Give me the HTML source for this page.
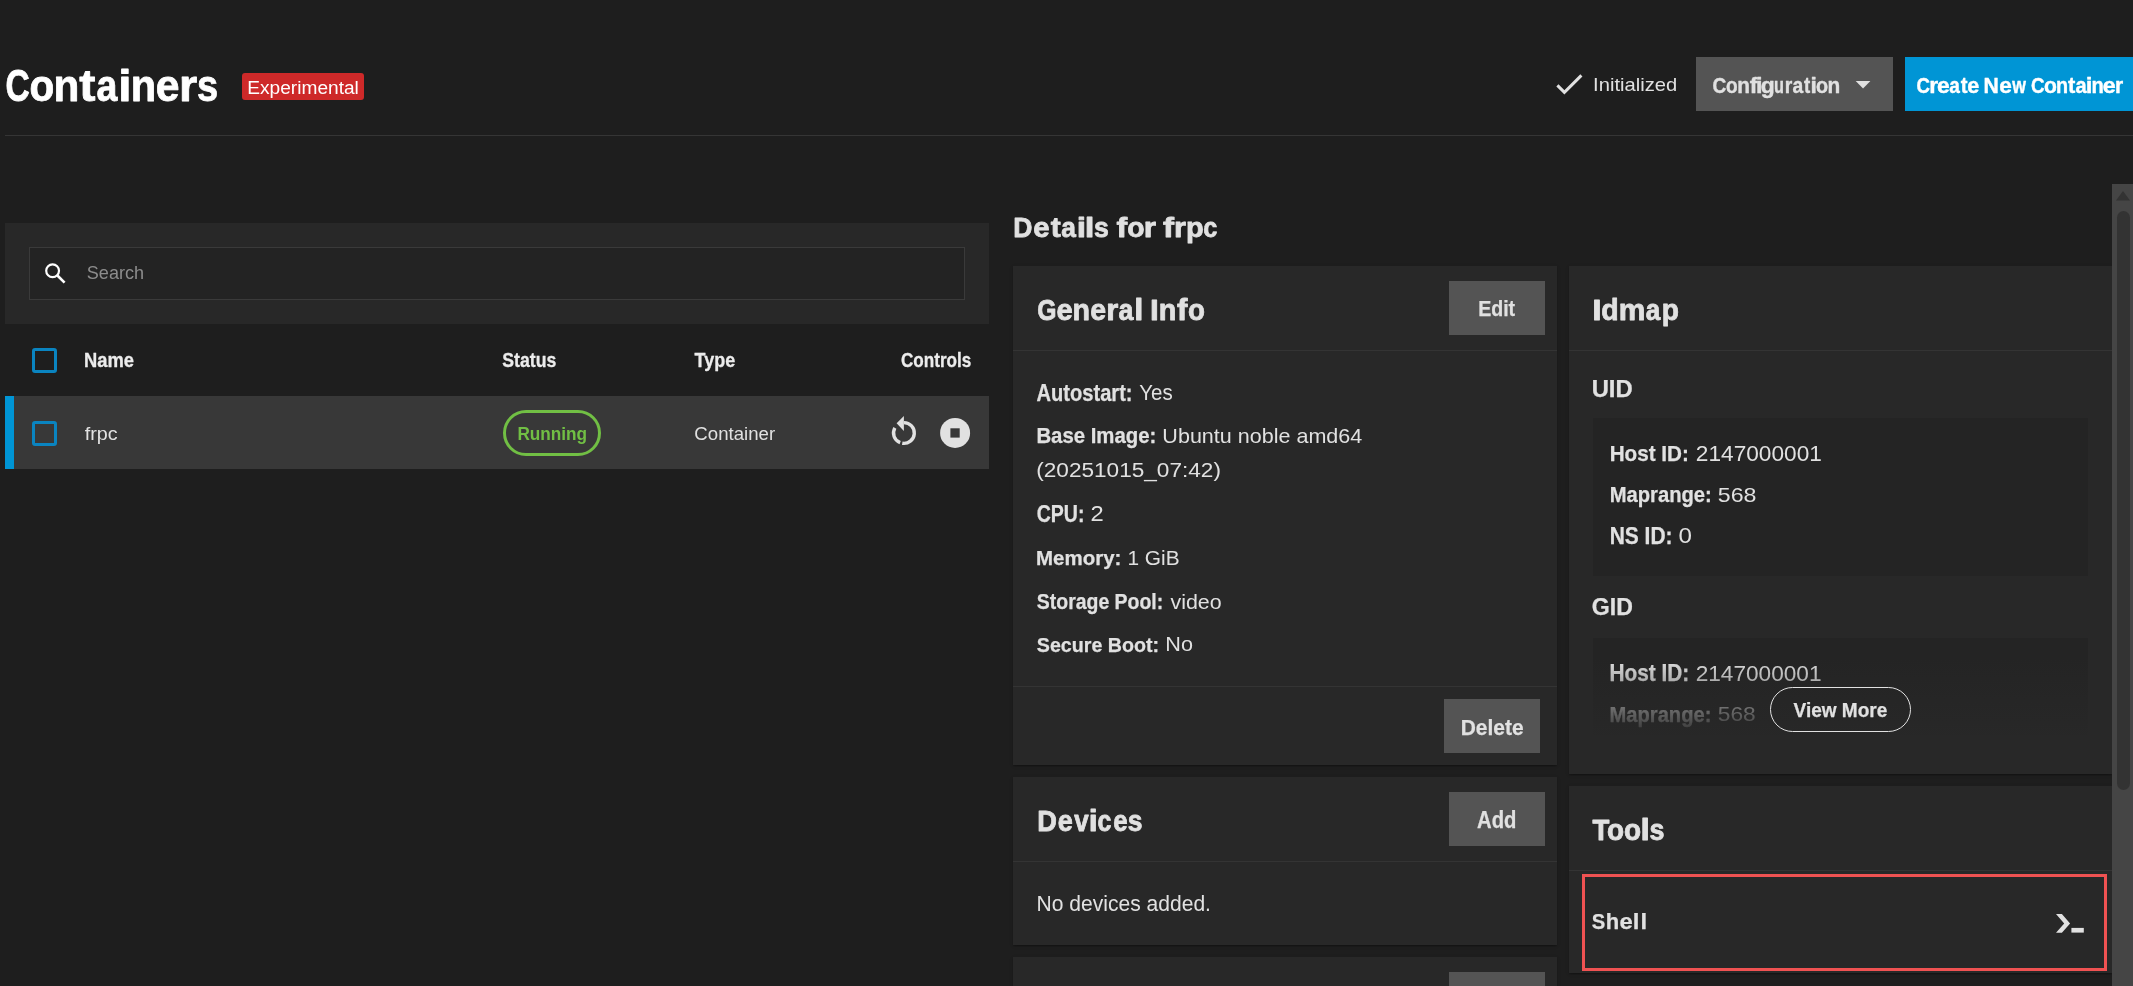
<!DOCTYPE html>
<html><head><meta charset="utf-8"><title>Containers</title>
<style>
html,body{margin:0;padding:0;}
body{width:2133px;height:986px;overflow:hidden;background:#1e1e1e;position:relative;font-family:"Liberation Sans",sans-serif;}
svg text{font-family:"Liberation Sans",sans-serif;}
</style></head><body>
<div style="position:absolute;left:5px;top:135px;width:2128px;height:1px;background:#353535;"></div>
<div style="position:absolute;left:242px;top:73px;width:122px;height:27px;background:#ce2929;border-radius:3px"></div>
<div style="position:absolute;left:1696px;top:57px;width:197px;height:54px;background:#545454;"></div>
<div style="position:absolute;left:1905px;top:57px;width:228px;height:54px;background:#0095d5;"></div>
<div style="position:absolute;left:5px;top:223px;width:984px;height:101px;background:#282828;"></div>
<div style="position:absolute;left:29px;top:247px;width:936px;height:53px;background:#232323;box-sizing:border-box;border:1px solid #3a3a3a"></div>
<div style="position:absolute;left:32px;top:348px;width:25px;height:25px;background:transparent;box-sizing:border-box;border:3px solid #0a84c0;border-radius:3px"></div>
<div style="position:absolute;left:5px;top:396px;width:984px;height:73px;background:#383838;"></div>
<div style="position:absolute;left:5px;top:396px;width:9px;height:73px;background:#0095d5;"></div>
<div style="position:absolute;left:32px;top:421px;width:25px;height:25px;background:transparent;box-sizing:border-box;border:3px solid #0a84c0;border-radius:3px"></div>
<div style="position:absolute;left:503px;top:410px;width:98px;height:46px;background:transparent;box-sizing:border-box;border:3.1px solid #71bf44;border-radius:23px"></div>
<div style="position:absolute;left:1013px;top:266px;width:544px;height:499px;background:#282828;box-shadow:0 2.7px 1.3px -1.3px rgba(0,0,0,.2),0 1.3px 1.3px 0 rgba(0,0,0,.14),0 1.3px 4px 0 rgba(0,0,0,.12)"></div>
<div style="position:absolute;left:1013px;top:350px;width:544px;height:1px;background:#343434;"></div>
<div style="position:absolute;left:1013px;top:686px;width:544px;height:1px;background:#343434;"></div>
<div style="position:absolute;left:1449px;top:281px;width:96px;height:54px;background:#545454;"></div>
<div style="position:absolute;left:1444px;top:699px;width:96px;height:54px;background:#545454;"></div>
<div style="position:absolute;left:1013px;top:777px;width:544px;height:168px;background:#282828;box-shadow:0 2.7px 1.3px -1.3px rgba(0,0,0,.2),0 1.3px 1.3px 0 rgba(0,0,0,.14),0 1.3px 4px 0 rgba(0,0,0,.12)"></div>
<div style="position:absolute;left:1013px;top:861px;width:544px;height:1px;background:#343434;"></div>
<div style="position:absolute;left:1449px;top:792px;width:96px;height:54px;background:#545454;"></div>
<div style="position:absolute;left:1013px;top:957px;width:544px;height:29px;background:#282828;box-shadow:0 2.7px 1.3px -1.3px rgba(0,0,0,.2),0 1.3px 1.3px 0 rgba(0,0,0,.14),0 1.3px 4px 0 rgba(0,0,0,.12)"></div>
<div style="position:absolute;left:1449px;top:972px;width:96px;height:14px;background:#545454;"></div>
<div style="position:absolute;left:1569px;top:266px;width:543px;height:508px;background:#282828;box-shadow:0 2.7px 1.3px -1.3px rgba(0,0,0,.2),0 1.3px 1.3px 0 rgba(0,0,0,.14),0 1.3px 4px 0 rgba(0,0,0,.12)"></div>
<div style="position:absolute;left:1569px;top:350px;width:543px;height:1px;background:#343434;"></div>
<div style="position:absolute;left:1593px;top:418px;width:495px;height:158px;background:#242424;"></div>
<div style="position:absolute;left:1593px;top:638px;width:495px;height:97px;background:linear-gradient(to bottom,#242424 0px,#242424 19px,#282828 106px);"></div>
<div style="position:absolute;left:1770px;top:687px;width:141px;height:45px;background:transparent;box-sizing:border-box;border:1.4px solid #e1e1e1;border-radius:23px"></div>
<div style="position:absolute;left:1569px;top:786px;width:543px;height:187px;background:#282828;box-shadow:0 2.7px 1.3px -1.3px rgba(0,0,0,.2),0 1.3px 1.3px 0 rgba(0,0,0,.14),0 1.3px 4px 0 rgba(0,0,0,.12)"></div>
<div style="position:absolute;left:1569px;top:870px;width:543px;height:1px;background:#343434;"></div>
<div style="position:absolute;left:1582px;top:874px;width:525px;height:97px;background:transparent;box-sizing:border-box;border:3px solid #f05252"></div>
<div style="position:absolute;left:2112px;top:184px;width:21px;height:802px;background:#454545;"></div>
<div style="position:absolute;left:2117px;top:211px;width:13px;height:579px;background:#333333;border-radius:7px"></div>
<svg width="2133" height="986" viewBox="0 0 2133 986" style="position:absolute;left:0;top:0;opacity:0.999">
<text x="5.46" y="100.70" font-size="44.07" font-weight="700" fill="#ffffff" stroke="#ffffff" stroke-width="0.80" stroke-linejoin="round" textLength="24.26" lengthAdjust="spacingAndGlyphs">C</text>
<text x="29.38" y="100.70" font-size="44.07" font-weight="700" fill="#ffffff" stroke="#ffffff" stroke-width="0.80" stroke-linejoin="round" textLength="24.78" lengthAdjust="spacingAndGlyphs">o</text>
<text x="53.45" y="100.70" font-size="44.07" font-weight="700" fill="#ffffff" stroke="#ffffff" stroke-width="0.80" stroke-linejoin="round" textLength="25.82" lengthAdjust="spacingAndGlyphs">n</text>
<text x="79.31" y="100.70" font-size="44.07" font-weight="700" fill="#ffffff" stroke="#ffffff" stroke-width="0.80" stroke-linejoin="round" textLength="16.22" lengthAdjust="spacingAndGlyphs">t</text>
<text x="96.47" y="100.70" font-size="44.07" font-weight="700" fill="#ffffff" stroke="#ffffff" stroke-width="0.80" stroke-linejoin="round" textLength="20.90" lengthAdjust="spacingAndGlyphs">a</text>
<text x="118.35" y="100.70" font-size="44.07" font-weight="700" fill="#ffffff" stroke="#ffffff" stroke-width="0.80" stroke-linejoin="round" textLength="13.30" lengthAdjust="spacingAndGlyphs">i</text>
<text x="130.69" y="100.70" font-size="44.07" font-weight="700" fill="#ffffff" stroke="#ffffff" stroke-width="0.80" stroke-linejoin="round" textLength="25.44" lengthAdjust="spacingAndGlyphs">n</text>
<text x="155.79" y="100.70" font-size="44.07" font-weight="700" fill="#ffffff" stroke="#ffffff" stroke-width="0.80" stroke-linejoin="round" textLength="23.75" lengthAdjust="spacingAndGlyphs">e</text>
<text x="178.96" y="100.70" font-size="44.07" font-weight="700" fill="#ffffff" stroke="#ffffff" stroke-width="0.80" stroke-linejoin="round" textLength="18.20" lengthAdjust="spacingAndGlyphs">r</text>
<text x="197.07" y="100.70" font-size="44.07" font-weight="700" fill="#ffffff" stroke="#ffffff" stroke-width="0.80" stroke-linejoin="round" textLength="21.20" lengthAdjust="spacingAndGlyphs">s</text>
<text x="247.27" y="94.20" font-size="17.89" font-weight="400" fill="#ffffff" textLength="111.59" lengthAdjust="spacingAndGlyphs">Experimental</text>
<polyline points="1557.4,85.4 1564.4,92.4 1581.4,75.4" fill="none" stroke="#e1e1e1" stroke-width="3"/>
<text x="1593.08" y="91.30" font-size="18.33" font-weight="400" fill="#e1e1e1" textLength="84.11" lengthAdjust="spacingAndGlyphs">Initialized</text>
<text x="1712.54" y="92.60" font-size="21.24" font-weight="700" fill="#e1e1e1" stroke="#e1e1e1" stroke-width="0.40" stroke-linejoin="round" textLength="13.78" lengthAdjust="spacingAndGlyphs">C</text>
<text x="1726.04" y="92.60" font-size="21.24" font-weight="700" fill="#e1e1e1" stroke="#e1e1e1" stroke-width="0.40" stroke-linejoin="round" textLength="11.64" lengthAdjust="spacingAndGlyphs">o</text>
<text x="1737.25" y="92.60" font-size="21.24" font-weight="700" fill="#e1e1e1" stroke="#e1e1e1" stroke-width="0.40" stroke-linejoin="round" textLength="12.72" lengthAdjust="spacingAndGlyphs">n</text>
<text x="1749.65" y="92.60" font-size="21.24" font-weight="700" fill="#e1e1e1" stroke="#e1e1e1" stroke-width="0.40" stroke-linejoin="round" textLength="7.70" lengthAdjust="spacingAndGlyphs">f</text>
<text x="1755.95" y="92.60" font-size="21.24" font-weight="700" fill="#e1e1e1" stroke="#e1e1e1" stroke-width="0.40" stroke-linejoin="round" textLength="6.55" lengthAdjust="spacingAndGlyphs">i</text>
<text x="1760.88" y="92.60" font-size="21.24" font-weight="700" fill="#e1e1e1" stroke="#e1e1e1" stroke-width="0.40" stroke-linejoin="round" textLength="14.03" lengthAdjust="spacingAndGlyphs">g</text>
<text x="1774.02" y="92.60" font-size="21.24" font-weight="700" fill="#e1e1e1" stroke="#e1e1e1" stroke-width="0.40" stroke-linejoin="round" textLength="9.95" lengthAdjust="spacingAndGlyphs">u</text>
<text x="1784.84" y="92.60" font-size="21.24" font-weight="700" fill="#e1e1e1" stroke="#e1e1e1" stroke-width="0.40" stroke-linejoin="round" textLength="7.53" lengthAdjust="spacingAndGlyphs">r</text>
<text x="1792.42" y="92.60" font-size="21.24" font-weight="700" fill="#e1e1e1" stroke="#e1e1e1" stroke-width="0.40" stroke-linejoin="round" textLength="10.71" lengthAdjust="spacingAndGlyphs">a</text>
<text x="1803.91" y="92.60" font-size="21.24" font-weight="700" fill="#e1e1e1" stroke="#e1e1e1" stroke-width="0.40" stroke-linejoin="round" textLength="6.23" lengthAdjust="spacingAndGlyphs">t</text>
<text x="1810.50" y="92.60" font-size="21.24" font-weight="700" fill="#e1e1e1" stroke="#e1e1e1" stroke-width="0.40" stroke-linejoin="round" textLength="6.35" lengthAdjust="spacingAndGlyphs">i</text>
<text x="1816.01" y="92.60" font-size="21.24" font-weight="700" fill="#e1e1e1" stroke="#e1e1e1" stroke-width="0.40" stroke-linejoin="round" textLength="12.10" lengthAdjust="spacingAndGlyphs">o</text>
<text x="1827.45" y="92.60" font-size="21.24" font-weight="700" fill="#e1e1e1" stroke="#e1e1e1" stroke-width="0.40" stroke-linejoin="round" textLength="12.72" lengthAdjust="spacingAndGlyphs">n</text>
<polygon points="1855.7,81 1870.4,81 1863.05,88.4" fill="#e1e1e1"/>
<text x="1916.45" y="92.60" font-size="21.24" font-weight="700" fill="#ffffff" stroke="#ffffff" stroke-width="0.40" stroke-linejoin="round" textLength="13.45" lengthAdjust="spacingAndGlyphs">C</text>
<text x="1929.31" y="92.60" font-size="21.24" font-weight="700" fill="#ffffff" stroke="#ffffff" stroke-width="0.40" stroke-linejoin="round" textLength="8.91" lengthAdjust="spacingAndGlyphs">r</text>
<text x="1937.08" y="92.60" font-size="21.24" font-weight="700" fill="#ffffff" stroke="#ffffff" stroke-width="0.40" stroke-linejoin="round" textLength="12.75" lengthAdjust="spacingAndGlyphs">e</text>
<text x="1949.33" y="92.60" font-size="21.24" font-weight="700" fill="#ffffff" stroke="#ffffff" stroke-width="0.40" stroke-linejoin="round" textLength="10.60" lengthAdjust="spacingAndGlyphs">a</text>
<text x="1960.80" y="92.60" font-size="21.24" font-weight="700" fill="#ffffff" stroke="#ffffff" stroke-width="0.40" stroke-linejoin="round" textLength="6.77" lengthAdjust="spacingAndGlyphs">t</text>
<text x="1967.33" y="92.60" font-size="21.24" font-weight="700" fill="#ffffff" stroke="#ffffff" stroke-width="0.40" stroke-linejoin="round" textLength="12.05" lengthAdjust="spacingAndGlyphs">e</text>
<text x="1983.62" y="92.60" font-size="21.24" font-weight="700" fill="#ffffff" stroke="#ffffff" stroke-width="0.40" stroke-linejoin="round" textLength="15.30" lengthAdjust="spacingAndGlyphs">N</text>
<text x="1999.29" y="92.60" font-size="21.24" font-weight="700" fill="#ffffff" stroke="#ffffff" stroke-width="0.40" stroke-linejoin="round" textLength="12.63" lengthAdjust="spacingAndGlyphs">e</text>
<text x="2012.19" y="92.60" font-size="21.24" font-weight="700" fill="#ffffff" stroke="#ffffff" stroke-width="0.40" stroke-linejoin="round" textLength="13.67" lengthAdjust="spacingAndGlyphs">w</text>
<text x="2031.05" y="92.60" font-size="21.24" font-weight="700" fill="#ffffff" stroke="#ffffff" stroke-width="0.40" stroke-linejoin="round" textLength="13.56" lengthAdjust="spacingAndGlyphs">C</text>
<text x="2043.95" y="92.60" font-size="21.24" font-weight="700" fill="#ffffff" stroke="#ffffff" stroke-width="0.40" stroke-linejoin="round" textLength="12.91" lengthAdjust="spacingAndGlyphs">o</text>
<text x="2055.91" y="92.60" font-size="21.24" font-weight="700" fill="#ffffff" stroke="#ffffff" stroke-width="0.40" stroke-linejoin="round" textLength="12.09" lengthAdjust="spacingAndGlyphs">n</text>
<text x="2068.08" y="92.60" font-size="21.24" font-weight="700" fill="#ffffff" stroke="#ffffff" stroke-width="0.40" stroke-linejoin="round" textLength="7.31" lengthAdjust="spacingAndGlyphs">t</text>
<text x="2075.40" y="92.60" font-size="21.24" font-weight="700" fill="#ffffff" stroke="#ffffff" stroke-width="0.40" stroke-linejoin="round" textLength="11.12" lengthAdjust="spacingAndGlyphs">a</text>
<text x="2085.70" y="92.60" font-size="21.24" font-weight="700" fill="#ffffff" stroke="#ffffff" stroke-width="0.40" stroke-linejoin="round" textLength="6.75" lengthAdjust="spacingAndGlyphs">i</text>
<text x="2091.59" y="92.60" font-size="21.24" font-weight="700" fill="#ffffff" stroke="#ffffff" stroke-width="0.40" stroke-linejoin="round" textLength="12.34" lengthAdjust="spacingAndGlyphs">n</text>
<text x="2102.77" y="92.60" font-size="21.24" font-weight="700" fill="#ffffff" stroke="#ffffff" stroke-width="0.40" stroke-linejoin="round" textLength="12.98" lengthAdjust="spacingAndGlyphs">e</text>
<text x="2115.04" y="92.60" font-size="21.24" font-weight="700" fill="#ffffff" stroke="#ffffff" stroke-width="0.40" stroke-linejoin="round" textLength="8.16" lengthAdjust="spacingAndGlyphs">r</text>
<circle cx="52.6" cy="270.7" r="6.4" fill="none" stroke="#ffffff" stroke-width="2.2"/>
<line x1="57.4" y1="275.5" x2="64.6" y2="282.7" stroke="#ffffff" stroke-width="2.6"/>
<text x="86.79" y="279.00" font-size="18.04" font-weight="400" fill="#8c8c8c" textLength="57.25" lengthAdjust="spacingAndGlyphs">Search</text>
<text x="83.96" y="367.25" font-size="20.36" font-weight="700" fill="#ececec" stroke="#ececec" stroke-width="0.30" stroke-linejoin="round" textLength="50.01" lengthAdjust="spacingAndGlyphs">Name</text>
<text x="502.32" y="367.25" font-size="20.36" font-weight="700" fill="#ececec" stroke="#ececec" stroke-width="0.30" stroke-linejoin="round" textLength="54.06" lengthAdjust="spacingAndGlyphs">Status</text>
<text x="694.57" y="367.25" font-size="20.36" font-weight="700" fill="#ececec" stroke="#ececec" stroke-width="0.30" stroke-linejoin="round" textLength="40.61" lengthAdjust="spacingAndGlyphs">Type</text>
<text x="900.97" y="367.05" font-size="19.49" font-weight="700" fill="#ececec" stroke="#ececec" stroke-width="0.30" stroke-linejoin="round" textLength="70.39" lengthAdjust="spacingAndGlyphs">Controls</text>
<text x="84.70" y="440.00" font-size="18.50" font-weight="400" fill="#e1e1e1" textLength="32.93" lengthAdjust="spacingAndGlyphs">frpc</text>
<text x="517.38" y="440.00" font-size="18.33" font-weight="700" fill="#71bf44" textLength="69.72" lengthAdjust="spacingAndGlyphs">Running</text>
<text x="694.37" y="440.00" font-size="17.45" font-weight="400" fill="#e1e1e1" textLength="80.73" lengthAdjust="spacingAndGlyphs">Container</text>
<path d="M903.90 422.60 A10.4 10.4 0 1 1 902.27 443.27 M900.17 442.71 A10.4 10.4 0 0 1 894.89 427.80" fill="none" stroke="#e1e1e1" stroke-width="3.4"/>
<polygon points="903.9,415.9 896.6,423.3 903.9,431.0" fill="#e1e1e1"/>
<circle cx="955.1" cy="432.9" r="15" fill="#e1e1e1"/>
<rect x="950.4" y="428.3" width="9.3" height="9.3" fill="#383838"/>
<text x="1013.28" y="236.60" font-size="28.36" font-weight="700" fill="#e1e1e1" stroke="#e1e1e1" stroke-width="0.80" stroke-linejoin="round" textLength="19.14" lengthAdjust="spacingAndGlyphs">D</text>
<text x="1033.23" y="236.60" font-size="28.36" font-weight="700" fill="#e1e1e1" stroke="#e1e1e1" stroke-width="0.80" stroke-linejoin="round" textLength="16.34" lengthAdjust="spacingAndGlyphs">e</text>
<text x="1050.80" y="236.60" font-size="28.36" font-weight="700" fill="#e1e1e1" stroke="#e1e1e1" stroke-width="0.80" stroke-linejoin="round" textLength="9.99" lengthAdjust="spacingAndGlyphs">t</text>
<text x="1061.21" y="236.60" font-size="28.36" font-weight="700" fill="#e1e1e1" stroke="#e1e1e1" stroke-width="0.80" stroke-linejoin="round" textLength="14.66" lengthAdjust="spacingAndGlyphs">a</text>
<text x="1076.85" y="236.60" font-size="28.36" font-weight="700" fill="#e1e1e1" stroke="#e1e1e1" stroke-width="0.80" stroke-linejoin="round" textLength="9.33" lengthAdjust="spacingAndGlyphs">i</text>
<text x="1084.75" y="236.60" font-size="28.36" font-weight="700" fill="#e1e1e1" stroke="#e1e1e1" stroke-width="0.80" stroke-linejoin="round" textLength="9.72" lengthAdjust="spacingAndGlyphs">l</text>
<text x="1094.07" y="236.60" font-size="28.36" font-weight="700" fill="#e1e1e1" stroke="#e1e1e1" stroke-width="0.80" stroke-linejoin="round" textLength="14.83" lengthAdjust="spacingAndGlyphs">s</text>
<text x="1116.62" y="236.60" font-size="28.36" font-weight="700" fill="#e1e1e1" stroke="#e1e1e1" stroke-width="0.80" stroke-linejoin="round" textLength="10.72" lengthAdjust="spacingAndGlyphs">f</text>
<text x="1127.27" y="236.60" font-size="28.36" font-weight="700" fill="#e1e1e1" stroke="#e1e1e1" stroke-width="0.80" stroke-linejoin="round" textLength="17.29" lengthAdjust="spacingAndGlyphs">o</text>
<text x="1143.65" y="236.60" font-size="28.36" font-weight="700" fill="#e1e1e1" stroke="#e1e1e1" stroke-width="0.80" stroke-linejoin="round" textLength="12.30" lengthAdjust="spacingAndGlyphs">r</text>
<text x="1163.00" y="236.60" font-size="28.36" font-weight="700" fill="#e1e1e1" stroke="#e1e1e1" stroke-width="0.80" stroke-linejoin="round" textLength="11.03" lengthAdjust="spacingAndGlyphs">f</text>
<text x="1173.91" y="236.60" font-size="28.36" font-weight="700" fill="#e1e1e1" stroke="#e1e1e1" stroke-width="0.80" stroke-linejoin="round" textLength="11.93" lengthAdjust="spacingAndGlyphs">r</text>
<text x="1185.92" y="236.60" font-size="28.36" font-weight="700" fill="#e1e1e1" stroke="#e1e1e1" stroke-width="0.80" stroke-linejoin="round" textLength="17.66" lengthAdjust="spacingAndGlyphs">p</text>
<text x="1203.29" y="236.60" font-size="28.36" font-weight="700" fill="#e1e1e1" stroke="#e1e1e1" stroke-width="0.80" stroke-linejoin="round" textLength="14.10" lengthAdjust="spacingAndGlyphs">c</text>
<text x="1037.21" y="319.60" font-size="29.82" font-weight="700" fill="#e1e1e1" stroke="#e1e1e1" stroke-width="0.80" stroke-linejoin="round" textLength="19.24" lengthAdjust="spacingAndGlyphs">G</text>
<text x="1056.43" y="319.60" font-size="29.82" font-weight="700" fill="#e1e1e1" stroke="#e1e1e1" stroke-width="0.80" stroke-linejoin="round" textLength="16.22" lengthAdjust="spacingAndGlyphs">e</text>
<text x="1072.44" y="319.60" font-size="29.82" font-weight="700" fill="#e1e1e1" stroke="#e1e1e1" stroke-width="0.80" stroke-linejoin="round" textLength="17.51" lengthAdjust="spacingAndGlyphs">n</text>
<text x="1090.26" y="319.60" font-size="29.82" font-weight="700" fill="#e1e1e1" stroke="#e1e1e1" stroke-width="0.80" stroke-linejoin="round" textLength="15.87" lengthAdjust="spacingAndGlyphs">e</text>
<text x="1106.19" y="319.60" font-size="29.82" font-weight="700" fill="#e1e1e1" stroke="#e1e1e1" stroke-width="0.80" stroke-linejoin="round" textLength="12.05" lengthAdjust="spacingAndGlyphs">r</text>
<text x="1118.39" y="319.60" font-size="29.82" font-weight="700" fill="#e1e1e1" stroke="#e1e1e1" stroke-width="0.80" stroke-linejoin="round" textLength="14.97" lengthAdjust="spacingAndGlyphs">a</text>
<text x="1134.20" y="319.60" font-size="29.82" font-weight="700" fill="#e1e1e1" stroke="#e1e1e1" stroke-width="0.80" stroke-linejoin="round" textLength="9.13" lengthAdjust="spacingAndGlyphs">l</text>
<text x="1150.14" y="319.60" font-size="29.82" font-weight="700" fill="#e1e1e1" stroke="#e1e1e1" stroke-width="0.80" stroke-linejoin="round" textLength="8.81" lengthAdjust="spacingAndGlyphs">I</text>
<text x="1158.72" y="319.60" font-size="29.82" font-weight="700" fill="#e1e1e1" stroke="#e1e1e1" stroke-width="0.80" stroke-linejoin="round" textLength="17.63" lengthAdjust="spacingAndGlyphs">n</text>
<text x="1177.03" y="319.60" font-size="29.82" font-weight="700" fill="#e1e1e1" stroke="#e1e1e1" stroke-width="0.80" stroke-linejoin="round" textLength="10.41" lengthAdjust="spacingAndGlyphs">f</text>
<text x="1187.89" y="319.60" font-size="29.82" font-weight="700" fill="#e1e1e1" stroke="#e1e1e1" stroke-width="0.80" stroke-linejoin="round" textLength="16.94" lengthAdjust="spacingAndGlyphs">o</text>
<text x="1478.15" y="315.88" font-size="22.76" font-weight="700" fill="#e1e1e1" stroke="#e1e1e1" stroke-width="0.25" stroke-linejoin="round" textLength="36.99" lengthAdjust="spacingAndGlyphs">Edit</text>
<text x="1036.62" y="400.88" font-size="23.35" font-weight="700" fill="#e1e1e1" stroke="#e1e1e1" stroke-width="0.25" stroke-linejoin="round" textLength="95.91" lengthAdjust="spacingAndGlyphs">Autostart:</text>
<text x="1139.29" y="400.30" font-size="21.82" font-weight="400" fill="#e1e1e1" textLength="33.46" lengthAdjust="spacingAndGlyphs">Yes</text>
<text x="1036.40" y="443.48" font-size="22.47" font-weight="700" fill="#e1e1e1" stroke="#e1e1e1" stroke-width="0.25" stroke-linejoin="round" textLength="119.94" lengthAdjust="spacingAndGlyphs">Base Image:</text>
<text x="1162.39" y="442.90" font-size="20.95" font-weight="400" fill="#e1e1e1" textLength="199.86" lengthAdjust="spacingAndGlyphs">Ubuntu noble amd64</text>
<text x="1036.64" y="521.88" font-size="23.05" font-weight="700" fill="#e1e1e1" stroke="#e1e1e1" stroke-width="0.25" stroke-linejoin="round" textLength="47.78" lengthAdjust="spacingAndGlyphs">CPU:</text>
<text x="1090.51" y="521.30" font-size="21.53" font-weight="400" fill="#e1e1e1" textLength="13.20" lengthAdjust="spacingAndGlyphs">2</text>
<text x="1036.09" y="565.08" font-size="21.02" font-weight="700" fill="#e1e1e1" stroke="#e1e1e1" stroke-width="0.25" stroke-linejoin="round" textLength="85.28" lengthAdjust="spacingAndGlyphs">Memory:</text>
<text x="1127.44" y="564.50" font-size="19.49" font-weight="400" fill="#e1e1e1" textLength="52.13" lengthAdjust="spacingAndGlyphs">1 GiB</text>
<text x="1036.84" y="609.48" font-size="21.60" font-weight="700" fill="#e1e1e1" stroke="#e1e1e1" stroke-width="0.25" stroke-linejoin="round" textLength="126.39" lengthAdjust="spacingAndGlyphs">Storage Pool:</text>
<text x="1170.49" y="608.90" font-size="20.07" font-weight="400" fill="#e1e1e1" textLength="51.18" lengthAdjust="spacingAndGlyphs">video</text>
<text x="1036.84" y="651.88" font-size="21.02" font-weight="700" fill="#e1e1e1" stroke="#e1e1e1" stroke-width="0.25" stroke-linejoin="round" textLength="122.17" lengthAdjust="spacingAndGlyphs">Secure Boot:</text>
<text x="1165.27" y="651.30" font-size="19.49" font-weight="400" fill="#e1e1e1" textLength="27.67" lengthAdjust="spacingAndGlyphs">No</text>
<text x="1036.24" y="477.00" font-size="20.22" font-weight="400" fill="#e1e1e1" textLength="184.71" lengthAdjust="spacingAndGlyphs">(20251015_07:42)</text>
<text x="1460.66" y="734.77" font-size="22.76" font-weight="700" fill="#e1e1e1" stroke="#e1e1e1" stroke-width="0.25" stroke-linejoin="round" textLength="62.88" lengthAdjust="spacingAndGlyphs">Delete</text>
<text x="1037.33" y="830.70" font-size="29.09" font-weight="700" fill="#e1e1e1" stroke="#e1e1e1" stroke-width="0.80" stroke-linejoin="round" textLength="19.61" lengthAdjust="spacingAndGlyphs">D</text>
<text x="1057.72" y="830.70" font-size="29.09" font-weight="700" fill="#e1e1e1" stroke="#e1e1e1" stroke-width="0.80" stroke-linejoin="round" textLength="15.06" lengthAdjust="spacingAndGlyphs">e</text>
<text x="1074.17" y="830.70" font-size="29.09" font-weight="700" fill="#e1e1e1" stroke="#e1e1e1" stroke-width="0.80" stroke-linejoin="round" textLength="14.39" lengthAdjust="spacingAndGlyphs">v</text>
<text x="1088.65" y="830.70" font-size="29.09" font-weight="700" fill="#e1e1e1" stroke="#e1e1e1" stroke-width="0.80" stroke-linejoin="round" textLength="8.93" lengthAdjust="spacingAndGlyphs">i</text>
<text x="1097.50" y="830.70" font-size="29.09" font-weight="700" fill="#e1e1e1" stroke="#e1e1e1" stroke-width="0.80" stroke-linejoin="round" textLength="13.88" lengthAdjust="spacingAndGlyphs">c</text>
<text x="1113.17" y="830.70" font-size="29.09" font-weight="700" fill="#e1e1e1" stroke="#e1e1e1" stroke-width="0.80" stroke-linejoin="round" textLength="14.37" lengthAdjust="spacingAndGlyphs">e</text>
<text x="1127.67" y="830.70" font-size="29.09" font-weight="700" fill="#e1e1e1" stroke="#e1e1e1" stroke-width="0.80" stroke-linejoin="round" textLength="14.72" lengthAdjust="spacingAndGlyphs">s</text>
<text x="1477.02" y="827.88" font-size="23.64" font-weight="700" fill="#e1e1e1" stroke="#e1e1e1" stroke-width="0.25" stroke-linejoin="round" textLength="39.35" lengthAdjust="spacingAndGlyphs">Add</text>
<text x="1036.52" y="910.80" font-size="21.38" font-weight="400" fill="#e1e1e1" textLength="174.45" lengthAdjust="spacingAndGlyphs">No devices added.</text>
<text x="1592.30" y="319.80" font-size="29.67" font-weight="700" fill="#e1e1e1" stroke="#e1e1e1" stroke-width="0.80" stroke-linejoin="round" textLength="9.39" lengthAdjust="spacingAndGlyphs">I</text>
<text x="1601.36" y="319.80" font-size="29.67" font-weight="700" fill="#e1e1e1" stroke="#e1e1e1" stroke-width="0.80" stroke-linejoin="round" textLength="17.42" lengthAdjust="spacingAndGlyphs">d</text>
<text x="1618.85" y="319.80" font-size="29.67" font-weight="700" fill="#e1e1e1" stroke="#e1e1e1" stroke-width="0.80" stroke-linejoin="round" textLength="26.62" lengthAdjust="spacingAndGlyphs">m</text>
<text x="1645.81" y="319.80" font-size="29.67" font-weight="700" fill="#e1e1e1" stroke="#e1e1e1" stroke-width="0.80" stroke-linejoin="round" textLength="14.55" lengthAdjust="spacingAndGlyphs">a</text>
<text x="1661.87" y="319.80" font-size="29.67" font-weight="700" fill="#e1e1e1" stroke="#e1e1e1" stroke-width="0.80" stroke-linejoin="round" textLength="17.18" lengthAdjust="spacingAndGlyphs">p</text>
<text x="1591.70" y="396.57" font-size="23.20" font-weight="700" fill="#e1e1e1" stroke="#e1e1e1" stroke-width="0.25" stroke-linejoin="round" textLength="40.98" lengthAdjust="spacingAndGlyphs">UID</text>
<text x="1609.68" y="461.07" font-size="22.91" font-weight="700" fill="#e1e1e1" stroke="#e1e1e1" stroke-width="0.25" stroke-linejoin="round" textLength="79.22" lengthAdjust="spacingAndGlyphs">Host ID:</text>
<text x="1695.87" y="460.50" font-size="21.38" font-weight="400" fill="#e1e1e1" textLength="125.99" lengthAdjust="spacingAndGlyphs">2147000001</text>
<text x="1609.71" y="502.27" font-size="22.33" font-weight="700" fill="#e1e1e1" stroke="#e1e1e1" stroke-width="0.25" stroke-linejoin="round" textLength="102.11" lengthAdjust="spacingAndGlyphs">Maprange:</text>
<text x="1717.77" y="501.70" font-size="20.80" font-weight="400" fill="#e1e1e1" textLength="38.63" lengthAdjust="spacingAndGlyphs">568</text>
<text x="1609.66" y="543.67" font-size="23.35" font-weight="700" fill="#e1e1e1" stroke="#e1e1e1" stroke-width="0.25" stroke-linejoin="round" textLength="62.91" lengthAdjust="spacingAndGlyphs">NS ID:</text>
<text x="1678.43" y="543.10" font-size="21.82" font-weight="400" fill="#e1e1e1" textLength="13.44" lengthAdjust="spacingAndGlyphs">0</text>
<text x="1591.80" y="615.17" font-size="23.05" font-weight="700" fill="#e1e1e1" stroke="#e1e1e1" stroke-width="0.25" stroke-linejoin="round" textLength="41.06" lengthAdjust="spacingAndGlyphs">GID</text>
<defs><linearGradient id="fade" x1="0" y1="659" x2="0" y2="739" gradientUnits="userSpaceOnUse"><stop offset="0" stop-color="#fff"/><stop offset="1" stop-color="#000"/></linearGradient><mask id="m1" maskUnits="userSpaceOnUse" x="1593" y="638" width="495" height="97"><rect x="1593" y="638" width="495" height="97" fill="url(#fade)"/></mask></defs>
<g mask="url(#m1)">
<text x="1609.47" y="681.48" font-size="23.05" font-weight="700" fill="#e1e1e1" stroke="#e1e1e1" stroke-width="0.25" stroke-linejoin="round" textLength="79.64" lengthAdjust="spacingAndGlyphs">Host ID:</text>
<text x="1695.67" y="680.90" font-size="21.53" font-weight="400" fill="#e1e1e1" textLength="125.89" lengthAdjust="spacingAndGlyphs">2147000001</text>
<text x="1609.52" y="721.98" font-size="22.33" font-weight="700" fill="#e1e1e1" stroke="#e1e1e1" stroke-width="0.25" stroke-linejoin="round" textLength="101.90" lengthAdjust="spacingAndGlyphs">Maprange:</text>
<text x="1717.79" y="721.40" font-size="20.80" font-weight="400" fill="#e1e1e1" textLength="37.90" lengthAdjust="spacingAndGlyphs">568</text>
</g>
<text x="1793.53" y="717.48" font-size="19.85" font-weight="700" fill="#e1e1e1" stroke="#e1e1e1" stroke-width="0.25" stroke-linejoin="round" textLength="93.87" lengthAdjust="spacingAndGlyphs">View More</text>
<text x="1592.52" y="839.60" font-size="28.65" font-weight="700" fill="#e1e1e1" stroke="#e1e1e1" stroke-width="0.80" stroke-linejoin="round" textLength="16.88" lengthAdjust="spacingAndGlyphs">T</text>
<text x="1606.88" y="839.60" font-size="28.65" font-weight="700" fill="#e1e1e1" stroke="#e1e1e1" stroke-width="0.80" stroke-linejoin="round" textLength="17.06" lengthAdjust="spacingAndGlyphs">o</text>
<text x="1623.98" y="839.60" font-size="28.65" font-weight="700" fill="#e1e1e1" stroke="#e1e1e1" stroke-width="0.80" stroke-linejoin="round" textLength="17.06" lengthAdjust="spacingAndGlyphs">o</text>
<text x="1640.45" y="839.60" font-size="28.65" font-weight="700" fill="#e1e1e1" stroke="#e1e1e1" stroke-width="0.80" stroke-linejoin="round" textLength="9.33" lengthAdjust="spacingAndGlyphs">l</text>
<text x="1649.46" y="839.60" font-size="28.65" font-weight="700" fill="#e1e1e1" stroke="#e1e1e1" stroke-width="0.80" stroke-linejoin="round" textLength="14.95" lengthAdjust="spacingAndGlyphs">s</text>
<text x="1591.82" y="929.38" font-size="22.76" font-weight="700" fill="#e1e1e1" stroke="#e1e1e1" stroke-width="0.25" stroke-linejoin="round" textLength="13.51" lengthAdjust="spacingAndGlyphs">S</text>
<text x="1605.69" y="929.38" font-size="22.76" font-weight="700" fill="#e1e1e1" stroke="#e1e1e1" stroke-width="0.25" stroke-linejoin="round" textLength="13.43" lengthAdjust="spacingAndGlyphs">h</text>
<text x="1619.47" y="929.38" font-size="22.76" font-weight="700" fill="#e1e1e1" stroke="#e1e1e1" stroke-width="0.25" stroke-linejoin="round" textLength="13.27" lengthAdjust="spacingAndGlyphs">e</text>
<text x="1632.75" y="929.38" font-size="22.76" font-weight="700" fill="#e1e1e1" stroke="#e1e1e1" stroke-width="0.25" stroke-linejoin="round" textLength="6.65" lengthAdjust="spacingAndGlyphs">l</text>
<text x="1640.45" y="929.38" font-size="22.76" font-weight="700" fill="#e1e1e1" stroke="#e1e1e1" stroke-width="0.25" stroke-linejoin="round" textLength="6.65" lengthAdjust="spacingAndGlyphs">l</text>
<polygon points="2056,914.1 2061.9,914.1 2070.1,923.4 2061.9,932.8 2056,932.8 2064.2,923.4" fill="#e1e1e1"/>
<rect x="2071.4" y="927.9" width="12.4" height="4.7" fill="#e1e1e1"/>
<polygon points="2123,191 2130,200.6 2116,200.6" fill="#333333"/>
</svg>
</body></html>
